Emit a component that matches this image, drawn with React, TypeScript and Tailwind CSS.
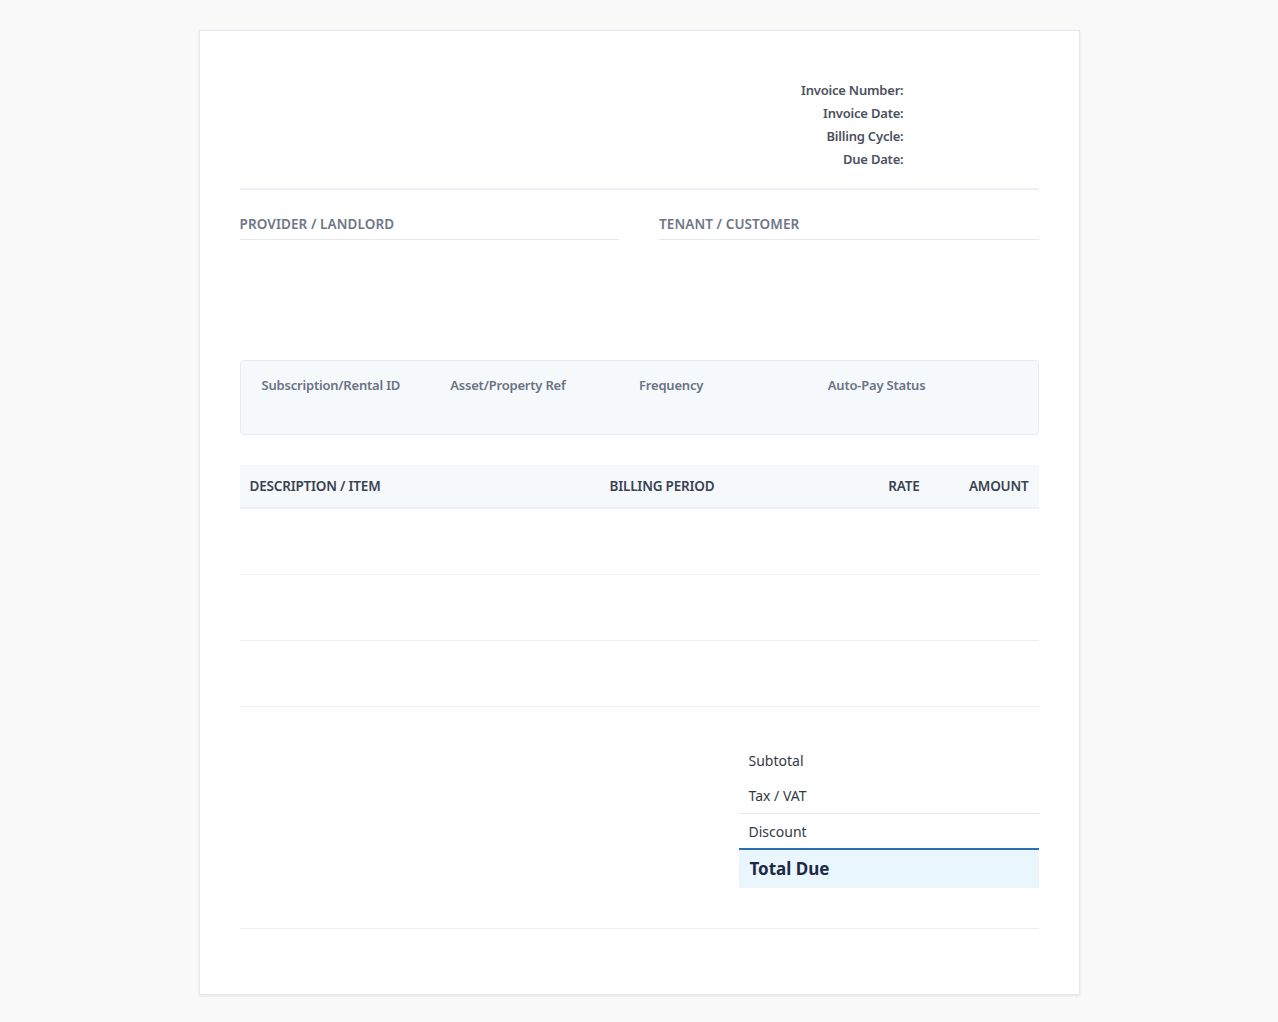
const META = ["Invoice Number:", "Invoice Date:", "Billing Cycle:", "Due Date:"];
const INFO = ["Subscription/Rental ID", "Asset/Property Ref", "Frequency", "Auto-Pay Status"];

export default function App() {
  return (
    <div className="min-h-screen bg-[#f9f9fa] pt-[30px] pb-[30px] font-['Roboto',sans-serif]">
      <div className="mx-auto w-[881px] border border-[#e3e8f0] bg-white px-10 pt-[50px] pb-[65px] shadow-[0_1px_3px_rgba(0,0,0,0.08)]">
        <header className="flex justify-end border-b-2 border-[#edf0f4] pb-[20px]">
          <div className="mr-[135px] flex flex-col items-end gap-[5px] text-[13px] font-semibold leading-[18px] tracking-[-0.2px] text-[#4a5160]">
            {META.map((m) => (
              <div key={m}>{m}</div>
            ))}
          </div>
        </header>

        <section className="mt-[25px] grid grid-cols-2 gap-10">
          {["PROVIDER / LANDLORD", "TENANT / CUSTOMER"].map((t) => (
            <div key={t}>
              <div className="border-b border-[#e5e8ee] pb-[6px] text-[13.5px] font-semibold leading-[18px] tracking-[0.1px] text-[#6e7687]">
                {t}
              </div>
            </div>
          ))}
        </section>

        <section className="mt-[120px] grid h-[75px] grid-cols-4 rounded border border-[#e6ecf3] bg-[#f5f9fc] px-[21px] pt-[15px]">
          {INFO.map((i) => (
            <div key={i} className="text-[13px] font-semibold tracking-[-0.2px] text-[#6a7284]">
              {i}
            </div>
          ))}
        </section>

        <section className="mt-[30px]">
          <div className="flex h-[44px] items-center border-b-2 border-[#edf1f5] bg-[#f5f9fc] px-[10px] text-[13.5px] font-semibold tracking-[-0.2px] text-[#3a4150]">
            <div className="w-[360px]">DESCRIPTION / ITEM</div>
            <div className="w-[225px]">BILLING PERIOD</div>
            <div className="w-[85px] text-right">RATE</div>
            <div className="flex-1 text-right">AMOUNT</div>
          </div>
          {[0, 1, 2].map((r) => (
            <div key={r} className="h-[66px] border-b border-[#eef0f3]" />
          ))}
        </section>

        <section className="flex justify-end border-b border-[#eef0f3] pt-[35px] pb-[40px] font-['Liberation_Sans',Arial,sans-serif]">
          <div className="w-[300px] text-[14px] text-[#333a45]">
            <div className="flex h-[36px] items-center px-[10px]">Subtotal</div>
            <div className="flex h-[36px] items-center border-b border-[#e6e9ef] px-[10px]">Tax / VAT</div>
            <div className="flex h-[36px] items-center border-b-2 border-[#2d6db4] px-[10px]">Discount</div>
            <div className="flex h-[38px] items-center bg-[#eaf6fe] px-[11px] text-[17px] font-bold text-[#1c2a45]">
              Total Due
            </div>
          </div>
        </section>
      </div>
    </div>
  );
}
